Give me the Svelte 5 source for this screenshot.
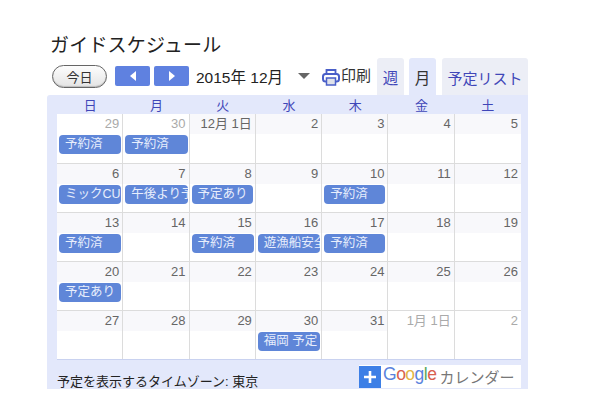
<script lang="ts">
  const DOW = ['日', '月', '火', '水', '木', '金', '土']
  const weeks = [
    [
      { d: '29', off: true, ev: '予約済' },
      { d: '30', off: true, ev: '予約済' },
      { d: '12月 1日' },
      { d: '2' },
      { d: '3' },
      { d: '4' },
      { d: '5' },
    ],
    [
      { d: '6', ev: 'ミックCUP' },
      { d: '7', ev: '午後より予約' },
      { d: '8', ev: '予定あり', short: true },
      { d: '9' },
      { d: '10', ev: '予約済', short: true },
      { d: '11' },
      { d: '12' },
    ],
    [
      { d: '13', ev: '予約済' },
      { d: '14' },
      { d: '15', ev: '予約済' },
      { d: '16', ev: '遊漁船安全' },
      { d: '17', ev: '予約済', short: true },
      { d: '18' },
      { d: '19' },
    ],
    [
      { d: '20', ev: '予定あり' },
      { d: '21' },
      { d: '22' },
      { d: '23' },
      { d: '24' },
      { d: '25' },
      { d: '26' },
    ],
    [
      { d: '27' },
      { d: '28' },
      { d: '29' },
      { d: '30', ev: '福岡 予定' },
      { d: '31' },
      { d: '1月 1日', off: true },
      { d: '2', off: true },
    ],
  ]
</script>

<div class="page">
  <h1 class="title">ガイドスケジュール</h1>

  <div class="toolbar">
    <button class="today">今日</button>
    <div class="nav">
      <button class="nav-btn" aria-label="前へ"><span class="tri tri-left"></span></button>
      <button class="nav-btn" aria-label="次へ"><span class="tri tri-right"></span></button>
    </div>
    <span class="date">2015年 12月</span>
    <span class="caret"></span>
    <span class="print">
      <svg class="print-icon" width="18" height="18" viewBox="0 0 18 18" aria-hidden="true">
        <path d="M4.5 6V2h9v4" fill="none" stroke="#4a5fc8" stroke-width="1.8" />
        <rect x="1" y="6" width="16" height="7.5" rx="2.5" fill="none" stroke="#4a5fc8" stroke-width="2" />
        <rect x="4.5" y="10" width="9" height="7" fill="#dfe2ea" stroke="#4a5fc8" stroke-width="1.5" />
      </svg>
      <span>印刷</span>
    </span>
    <div class="tabs">
      <span class="tab link">週</span>
      <span class="tab active">月</span>
      <span class="tab link wide">予定リスト</span>
    </div>
  </div>

  <div class="panel">
    <div class="dow">
      {#each DOW as name}
        <span>{name}</span>
      {/each}
    </div>
    <div class="grid">
      {#each weeks as week}
        <div class="week">
          {#each week as cell}
            <div class="cell">
              <div class="num" class:off={cell.off}>{cell.d}</div>
              {#if cell.ev}
                <div class="event" class:short={cell.short}>{cell.ev}</div>
              {/if}
            </div>
          {/each}
        </div>
      {/each}
    </div>
    <div class="foot">
      <span class="tz">予定を表示するタイムゾーン: 東京</span>
      <span class="gcal">
        <span class="plus">
          <svg width="14" height="14" viewBox="0 0 14 14" aria-hidden="true">
            <path d="M7 1v12M1 7h12" stroke="#fff" stroke-width="2.6" />
          </svg>
        </span>
        <span class="glogo">
          <span class="g-blue">G</span><span class="g-red">o</span><span class="g-yellow">o</span><span class="g-blue">g</span><span class="g-green">l</span><span class="g-red">e</span>
        </span>
        <span class="gcal-text">カレンダー</span>
      </span>
    </div>
  </div>
</div>

<style>
  :global(body) {
    background: #fff;
    font-family: 'Liberation Sans', 'Noto Sans CJK JP', sans-serif;
  }

  .page {
    width: 600px;
    height: 420px;
    padding: 35px 72px 0 47px;
    box-sizing: border-box;
    overflow: hidden;
    color: #222;
  }

  .title {
    margin: 0 0 0 3px;
    font-size: 19px;
    font-weight: 400;
    line-height: 22px;
    letter-spacing: 0.2px;
  }

  .toolbar {
    display: flex;
    align-items: center;
    height: 38px;
    padding-left: 5px;
    box-sizing: border-box;
  }

  .today {
    width: 55px;
    height: 23px;
    padding: 0;
    border: 1px solid #666;
    border-radius: 12px;
    background: linear-gradient(#fdfdfd, #e4e4e4);
    font: inherit;
    font-size: 13px;
    color: #333;
    box-shadow: inset 0 -1px 1px #bbb;
  }

  .nav {
    display: flex;
    gap: 4px;
    margin-left: 8px;
  }

  .nav-btn {
    display: flex;
    align-items: center;
    justify-content: center;
    width: 35px;
    height: 20px;
    padding: 0;
    border: 0;
    border-radius: 2px;
    background: #5f81e0;
  }

  .tri {
    width: 0;
    height: 0;
    border-top: 5px solid transparent;
    border-bottom: 5px solid transparent;
  }

  .tri-left {
    border-right: 6px solid #fff;
  }

  .tri-right {
    border-left: 6px solid #fff;
  }

  .date {
    margin-left: 7px;
    font-size: 15.5px;
    white-space: nowrap;
    color: #222;
  }

  .caret {
    margin-left: 15px;
    width: 0;
    height: 0;
    border-left: 6px solid transparent;
    border-right: 6px solid transparent;
    border-top: 6px solid #666;
  }

  .print {
    display: flex;
    align-items: flex-start;
    gap: 1px;
    margin-left: 12px;
    font-size: 15px;
    line-height: 18px;
    color: #333;
    white-space: nowrap;
  }

  .print-icon {
    margin-top: 1px;
  }

  .tabs {
    display: flex;
    align-items: stretch;
    margin-left: auto;
    align-self: flex-end;
    height: 37px;
  }

  .tab {
    display: flex;
    align-items: center;
    justify-content: center;
    width: 27px;
    margin-left: 5px;
    padding-top: 1px;
    box-sizing: border-box;
    border-radius: 3px 3px 0 0;
    background: #eceef6;
    font-size: 15.5px;
  }

  .tab.link {
    color: #3f46b8;
  }

  .tab.active {
    background: #e3e8fb;
    color: #333;
  }

  .tab.wide {
    width: 86px;
    margin-left: 6px;
    font-size: 15px;
    white-space: nowrap;
  }

  .panel {
    padding: 0 7px 0 10px;
    background: #e3e8fb;
    border-radius: 3px 0 0 0;
  }

  .dow {
    display: grid;
    grid-template-columns: repeat(7, 1fr);
    height: 19px;
    line-height: 22px;
    font-size: 13px;
    text-align: center;
    color: #3f46b8;
  }

  .grid {
    background: #fff;
    border-bottom: 1px solid #c9d2f0;
  }

  .week {
    display: grid;
    grid-template-columns: repeat(7, 1fr);
    height: 49px;
    border-bottom: 1px solid #dcdcdc;
    box-sizing: border-box;
  }

  .week:first-child {
    height: 50px;
  }

  .week:last-child {
    border-bottom: 0;
    height: 48px;
  }

  .cell {
    border-right: 1px solid #dcdcdc;
    min-width: 0;
    overflow: hidden;
  }

  .cell:last-child {
    border-right: 0;
  }

  .num {
    height: 20px;
    padding-right: 3px;
    background: #f8f8fb;
    font-size: 13px;
    line-height: 20px;
    text-align: right;
    color: #666;
    white-space: nowrap;
  }

  .num.off {
    color: #aaa;
    background: #fff;
  }

  .event {
    height: 19px;
    margin: 1px 1px 0 2px;
    padding-left: 6px;
    border-radius: 4px;
    background: #5f86d8;
    color: #e8eefc;
    font-size: 12.5px;
    line-height: 19px;
    white-space: nowrap;
    overflow: hidden;
  }

  .event.short {
    margin-right: 2px;
  }

  .foot {
    display: flex;
    justify-content: space-between;
    align-items: flex-start;
    height: 29px;
  }

  .tz {
    margin-top: 14px;
    font-size: 13px;
    line-height: 15px;
    color: #222;
    white-space: nowrap;
  }

  .gcal {
    display: flex;
    align-items: center;
    width: 162px;
    height: 23px;
    margin-top: 5px;
    background: #fff;
  }

  .plus {
    display: flex;
    align-items: center;
    justify-content: center;
    width: 22px;
    height: 22px;
    background: #3d7fe6;
  }

  .glogo {
    margin-left: 2px;
    margin-top: -4px;
    font-size: 17.5px;
    letter-spacing: -0.5px;
  }

  .g-blue {
    color: #5a83dd;
  }

  .g-red {
    color: #d8604e;
  }

  .g-yellow {
    color: #e3b544;
  }

  .g-green {
    color: #5aa860;
  }

  .gcal-text {
    margin-left: 3px;
    font-size: 15px;
    color: #777;
    white-space: nowrap;
  }
</style>
